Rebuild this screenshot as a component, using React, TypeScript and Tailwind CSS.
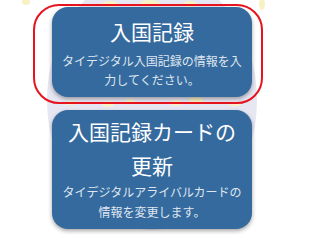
import React from "react";

function Watermark() {
  return (
    <svg
      className="absolute left-0 top-0 pointer-events-none"
      width="300"
      height="240"
      viewBox="0 0 300 240"
    >
      <ellipse cx="152" cy="100" rx="105" ry="130" fill="#e7e7f4" />
      <g fill="#f8f1c4">
        <ellipse cx="110" cy="4" rx="8" ry="3" />
        <ellipse cx="150" cy="3" rx="10" ry="3" />
        <ellipse cx="190" cy="4" rx="7" ry="3" />
        <ellipse cx="26" cy="2" rx="4" ry="3" />
        <ellipse cx="262" cy="4" rx="3" ry="6" />
        <ellipse cx="108" cy="104" rx="6" ry="3" />
        <ellipse cx="130" cy="101" rx="4" ry="2" />
        <ellipse cx="176" cy="103" rx="5" ry="3" />
        <ellipse cx="196" cy="100" rx="7" ry="3" />
        <ellipse cx="235" cy="104" rx="6" ry="2" />
        <ellipse cx="70" cy="103" rx="5" ry="2" />
      </g>
    </svg>
  );
}

export default function App() {
  return (
    <div
      className="relative w-[300px] h-[240px] overflow-hidden bg-white"
      style={{ fontFamily: '"Noto Sans CJK JP", "Noto Sans", sans-serif' }}
    >
      <Watermark />
      <div className="relative flex flex-col pt-[7px] pl-[52px] gap-[13px]">
        <div className="w-[200px] h-[90px] rounded-[16px] bg-[#356a9e] shadow-[0_2px_4px_rgba(0,0,0,0.35)] px-2 pt-[8px] text-center flex flex-col">
          <div className="text-[21px] leading-[33px] text-white">入国記録</div>
          <div className="mt-[3px] text-[12px] leading-[19px] text-[#dfe6ef]">
            タイデジタル入国記録の情報を入力してください。
          </div>
        </div>
        <div className="w-[200px] h-[119px] rounded-[16px] bg-[#356a9e] shadow-[0_2px_4px_rgba(0,0,0,0.35)] px-2 pt-[5px] text-center flex flex-col">
          <div className="text-[21px] leading-[33.5px] text-white">
            入国記録カードの更新
          </div>
          <div className="text-[12px] leading-[20px] text-[#dfe6ef]">
            タイデジタルアライバルカードの情報を変更します。
          </div>
        </div>
      </div>
      <div className="absolute left-[33px] top-[4px] w-[230px] h-[100px] rounded-[26px] border-2 border-[#e5141e]" />
    </div>
  );
}
